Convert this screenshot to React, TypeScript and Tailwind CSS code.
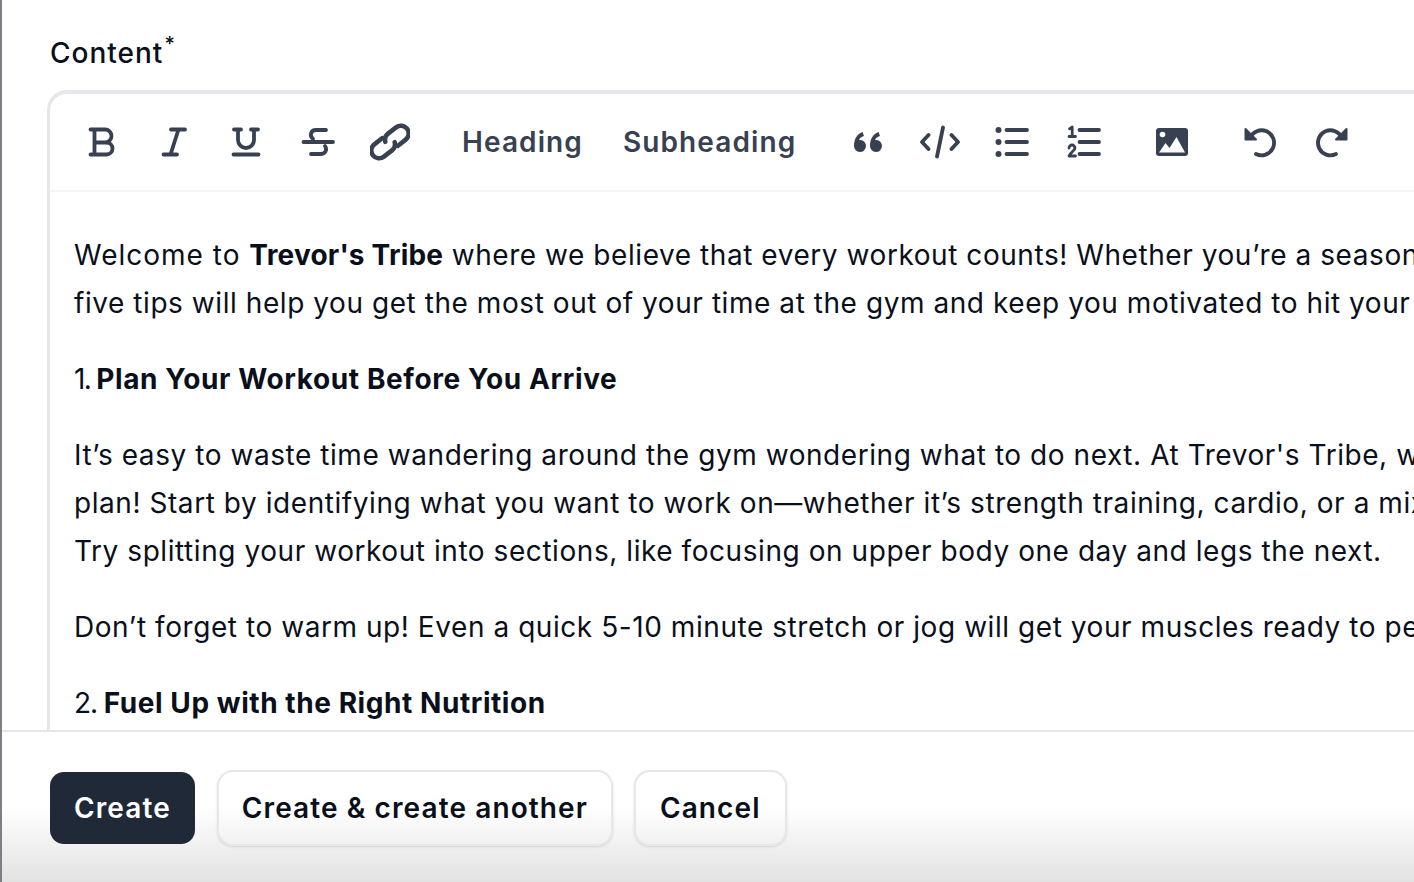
import React from "react";

const FONT = "[font-family:Inter,'Liberation_Sans',sans-serif]";

const Icon = ({ children }: { children: React.ReactNode }) => (
  <svg
    viewBox="-2 -2 40 40"
    className="w-10 h-10"
    fill="none"
    stroke="#374151"
    strokeWidth={3.8}
    strokeLinecap="round"
    strokeLinejoin="round"
  >
    {children}
  </svg>
);

const IconButton = ({ children }: { children: React.ReactNode }) => (
  <button className="w-[72px] h-[72px] flex items-center justify-center">
    <Icon>{children}</Icon>
  </button>
);

const TextButton = ({ label }: { label: string }) => (
  <button className="px-5 h-[72px] text-[28px] font-semibold tracking-[1.1px] text-[#374151]">
    {label}
  </button>
);

export default function App() {
  return (
    <div
      className={`w-[1414px] h-[882px] flex flex-col overflow-hidden bg-white border-l-2 border-[#7e7e84] text-[#0a0f1c] ${FONT}`}
    >
      <div className="flex-1 min-h-0 overflow-hidden pt-[29px] pl-[45px]">
        <label className="block ml-[3px] mb-[13px] text-[28px] leading-[48px] font-medium tracking-[1px]">
          Content<sup className="text-[20px] top-[-12px] ml-[1px]">*</sup>
        </label>
        <div className="w-[1500px] rounded-tl-[20px] border-t-4 border-l-[3px] border-[#e5e7eb]">
          <div className="flex items-center h-[98px] pl-[16px] border-b-2 border-[#f3f4f6]">
            <div className="flex">
              <IconButton>
                <path d="M6.500 5.500H21a6.500 6.500 0 0 1 0 13H11M10.500 5.500v25M6.500 30.500H22.500a6 6 0 0 0 0-12" />
              </IconButton>
              <IconButton>
                <path d="M15 5.500h14M7.500 30.500h13.500M22.500 5.500 14.500 30.500" />
              </IconButton>
              <IconButton>
                <path d="M6 5.500h7M23 5.500h7M10 5.500v10.500a8 8 0 0 0 16 0V5.500M5.500 30.500h25" />
              </IconButton>
              <IconButton>
                <path d="M3.500 18H33M26 6H16c-5 0-7 5.500-3 9M11 30h9.500c5 0 7-4.500 4.500-8" />
              </IconButton>
              <IconButton>
                <g transform="rotate(-38 18 18) translate(-3.600 -3.600) scale(1.200)">
                  <path d="M15 11.500H6.500a6.500 6.500 0 0 0 0 13H15a6.500 6.500 0 0 0 6-4" />
                  <path d="M21 24.500h8.500a6.500 6.500 0 0 0 0-13H21a6.500 6.500 0 0 0-6 4" />
                </g>
              </IconButton>
            </div>
            <div className="flex ml-4">
              <TextButton label="Heading" />
              <TextButton label="Subheading" />
            </div>
            <div className="flex ml-4">
              <IconButton>
                <path
                  fill="#374151"
                  stroke="none"
                  d="M12.500 8C7 10 4 15 4 22a6 6 0 1 0 6.500-6c-.5 0-1 0-1.500.2C9.500 14.500 11 13 14 12zM28.500 8C23 10 20 15 20 22a6 6 0 1 0 6.500-6c-.5 0-1 0-1.500.2C25.500 14.500 27 13 30 12z"
                />
              </IconButton>
              <IconButton>
                <path d="M6.500 11 0 18l6.500 7M29.500 11 36 18l-6.500 7M21 3.500 15 32.500" />
              </IconButton>
              <IconButton>
                <circle cx="4.500" cy="6" r="3" fill="#374151" stroke="none" />
                <circle cx="4.500" cy="18" r="3" fill="#374151" stroke="none" />
                <circle cx="4.500" cy="30" r="3" fill="#374151" stroke="none" />
                <path d="M12.500 6H33M12.500 18H33M12.500 30H33" />
              </IconButton>
              <IconButton>
                <path strokeWidth={2.800} d="M3.500 4.800 6.200 3v9.500M3 12.500h6.500M3 24a3 3 0 0 1 6 0c0 2.500-4 4-6 8h6.500" />
                <path d="M13.500 6H33M13.500 18H33M13.500 30H33" />
              </IconButton>
            </div>
            <div className="flex ml-4">
              <IconButton>
                <rect x="2" y="4" width="32" height="28" rx="3" fill="#374151" stroke="none" />
                <circle cx="8.500" cy="10.500" r="2.800" fill="#fff" stroke="none" />
                <path fill="#fff" stroke="none" d="M5 28.500 11.500 19l4 5L22.500 13 31 28.500z" />
              </IconButton>
            </div>
            <div className="flex ml-4">
              <IconButton>
                <path d="M8 14A12.500 12.500 0 1 1 14 30" />
                <path fill="#374151" strokeWidth={2} d="M3.500 5v10.500H14z" />
              </IconButton>
              <IconButton>
                <g transform="translate(36 0) scale(-1 1)">
                  <path d="M8 14A12.500 12.500 0 1 1 14 30" />
                  <path fill="#374151" strokeWidth={2} d="M3.500 5v10.500H14z" />
                </g>
              </IconButton>
            </div>
          </div>
          <div className="pt-[39px] pb-10 pl-6 text-[28px] leading-[48px] tracking-[0.56px] whitespace-nowrap space-y-7">
            <p>
              <span className="tracking-[1px]">Welcome to </span>
              <strong className="font-bold tracking-[0.2px]">Trevor's Tribe</strong> where we believe that every workout counts! Whether you’re a seasoned
              <br />
              five tips will help you get the most out of your time at the gym and keep you motivated to hit your goals.
            </p>
            <p>
              <span className="tracking-[-1.7px]">1. </span>
              <strong className="font-bold tracking-[0.6px]">Plan Your Workout Before You Arrive</strong>
            </p>
            <p>
              It’s easy to waste time wandering around the gym wondering what to do next. At Trevor's Tribe, we
              <br />
              plan! Start by identifying what you want to work on—whether it’s strength training, cardio, or a mix
              <br />
              Try splitting your workout into sections, like focusing on upper body one day and legs the next.
            </p>
            <p>
              Don’t forget to warm up! Even a quick 5-10 minute stretch or jog will get your muscles ready to perform
            </p>
            <p>
              <span className="tracking-[-1.1px]">2. </span>
              <strong className="font-bold">Fuel Up with the Right Nutrition</strong>
            </p>
          </div>
        </div>
      </div>
      <div className="h-[152px] shrink-0 border-t-2 border-[#e5e7eb] pt-[38px] pl-[48px] flex items-start gap-[21px] bg-linear-to-b from-white from-[50%] to-[#e2e2e2] text-[28px] font-semibold tracking-[1.1px]">
        <button className="mt-[2px] h-[72px] px-6 rounded-[14px] bg-[#1f2937] text-white">
          Create
        </button>
        <button className="ml-[1px] h-[76px] px-[23px] rounded-[16px] border-2 border-[#e5e7eb] shadow-sm">
          Create &amp; create another
        </button>
        <button className="h-[76px] px-6 rounded-[16px] border-2 border-[#e5e7eb] shadow-sm">
          Cancel
        </button>
      </div>
    </div>
  );
}
